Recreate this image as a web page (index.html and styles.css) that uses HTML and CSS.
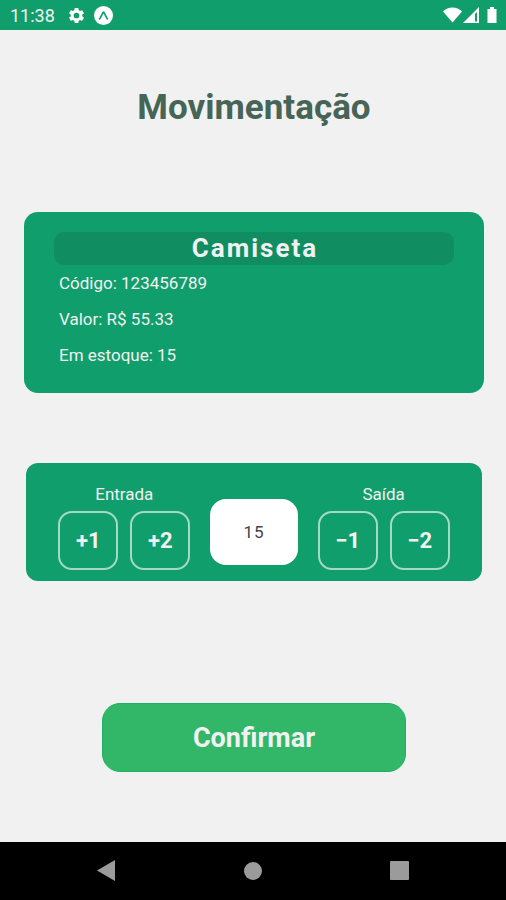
FILE: index.html
```html
<!DOCTYPE html>
<html lang="pt-BR">
<head>
    <meta charset="UTF-8">
    <meta name="viewport" content="width=device-width, initial-scale=1.0">
    <title>Movimentação</title>
    <link rel="stylesheet" href="styles.css">
</head>
<body>
    <header class="status-bar">
        <span class="clock">11:38</span>
        <svg class="status-icon" viewBox="0 0 24 24" width="19" height="19" fill="#fff">
            <path d="M19.14 12.94c.04-.3.06-.61.06-.94s-.02-.64-.07-.94l2.03-1.58a.49.49 0 0 0 .12-.61l-1.92-3.32a.49.49 0 0 0-.59-.22l-2.39.96a7 7 0 0 0-1.62-.94l-.36-2.54a.48.48 0 0 0-.48-.41h-3.84a.47.47 0 0 0-.47.41l-.36 2.54c-.59.24-1.13.57-1.62.94l-2.39-.96a.48.48 0 0 0-.59.22L2.74 8.87a.47.47 0 0 0 .12.61l2.03 1.58c-.05.3-.09.63-.09.94s.02.64.07.94l-2.03 1.58a.49.49 0 0 0-.12.61l1.92 3.32c.12.22.37.29.59.22l2.39-.96c.5.38 1.03.7 1.62.94l.36 2.54c.05.24.24.41.48.41h3.84c.24 0 .44-.17.47-.41l.36-2.54a7 7 0 0 0 1.62-.94l2.39.96c.22.08.47 0 .59-.22l1.92-3.32a.47.47 0 0 0-.12-.61zM12 15.6a3.6 3.6 0 1 1 0-7.2 3.6 3.6 0 0 1 0 7.2z"/>
        </svg>
        <svg class="status-icon" viewBox="0 0 20 20" width="19" height="19">
            <circle cx="10" cy="10" r="10" fill="#fff"/>
            <path d="M5.8 13.6C7.6 11.6 8.4 8.6 9.5 6.8c.3-.4.7-.4 1 0 1.1 1.8 1.9 4.8 3.7 6.8" fill="none" stroke="#109e6c" stroke-width="1.7" stroke-linecap="round"/>
        </svg>
        <svg class="signals" viewBox="0 0 56 20" width="56" height="20" fill="#fff">
            <path d="M1 6.500C6 1 15 1 20 6.500L10.500 17.500z"/>
            <path fill-rule="evenodd" d="M37 2v16H21zM33 9v7.500h2V7z"/>
            <path d="M48 2h4v2h2.500v14h-9V4H48z"/>
        </svg>
    </header>

    <main class="container">
        <h1>Movimentação</h1>

        <section class="product">
            <h2>Camiseta</h2>
            <p>Código: 123456789</p>
            <p>Valor: R$ 55.33</p>
            <p>Em estoque: 15</p>
        </section>

        <section class="movement">
            <div class="group">
                <span class="group-label" id="entrada">Entrada</span>
                <div class="buttons" role="group" aria-labelledby="entrada">
                    <button class="step" type="button" onclick="changeAmount(1)">+1</button>
                    <button class="step" type="button" onclick="changeAmount(2)">+2</button>
                </div>
            </div>
            <input class="amount" id="amount" type="text" inputmode="numeric" value="15" aria-label="Quantidade">
            <div class="group">
                <span class="group-label" id="saida">Saída</span>
                <div class="buttons" role="group" aria-labelledby="saida">
                    <button class="step" type="button" onclick="changeAmount(-1)">−1</button>
                    <button class="step" type="button" onclick="changeAmount(-2)">−2</button>
                </div>
            </div>
        </section>

        <button class="confirm" type="button">Confirmar</button>
    </main>

    <nav class="nav-bar">
        <button class="nav-button" type="button" aria-label="Voltar">
            <svg viewBox="0 0 20 22" width="20" height="22" fill="#9b9b9b"><path d="M19 0v21L1 10.500z"/></svg>
        </button>
        <button class="nav-button" type="button" aria-label="Início">
            <svg viewBox="0 0 20 20" width="20" height="20" fill="#9b9b9b"><circle cx="10" cy="10" r="9"/></svg>
        </button>
        <button class="nav-button" type="button" aria-label="Recentes">
            <svg viewBox="0 0 20 20" width="20" height="20" fill="#9b9b9b"><rect width="19" height="19" rx="1"/></svg>
        </button>
    </nav>

    <script>
        // Add or remove items, never going below zero
        function changeAmount(step) {
            const amount = document.getElementById('amount');
            amount.value = Math.max(0, (parseInt(amount.value, 10) || 0) + step);
        }
    </script>
</body>
</html>
```
FILE: styles.css
```css
* {
    box-sizing: border-box;
}

body {
    font-family: Roboto, sans-serif;
    margin: 0;
    background-color: #f1f1f1;
    color: #f1f1f1;
    display: flex;
    flex-direction: column;
    min-height: 100vh;
}

button,
input {
    font-family: inherit;
}

button {
    cursor: pointer;
}

.status-bar {
    display: flex;
    align-items: center;
    height: 30px;
    padding: 0 8px 0 10px;
    background-color: #109e6c;
}

.clock {
    font-size: 18px;
    margin-right: 4px;
}

.status-icon {
    margin-left: 8px;
}

.signals {
    margin-left: auto;
}

.container {
    flex: 1;
    display: flex;
    flex-direction: column;
    align-items: center;
    padding: 58px 22px 20px 24px;
}

h1 {
    margin: 0 0 84px;
    font-size: 35px;
    line-height: 40px;
    color: #466556;
}

.product {
    width: 100%;
    padding: 20px 30px;
    background-color: #109e6c;
    border-radius: 14px;
}

.product h2 {
    margin: 0;
    padding-left: 2px;
    font-size: 26px;
    line-height: 33px;
    letter-spacing: 2px;
    text-align: center;
    background-color: #108e61;
    border-radius: 10px;
}

.product p {
    margin: 0;
    padding-left: 5px;
    font-size: 17px;
    line-height: 36px;
}

.movement {
    display: flex;
    justify-content: space-between;
    align-items: flex-end;
    width: 99%;
    margin: 70px 0 122px;
    padding: 20px 32px 11px;
    background-color: #109e6c;
    border-radius: 12px;
}

.group {
    display: flex;
    flex-direction: column;
    align-items: center;
    gap: 6px;
}

.group-label {
    font-size: 17px;
    line-height: 22px;
}

.buttons {
    display: flex;
    gap: 12px;
}

.step {
    width: 60px;
    height: 59px;
    padding: 0;
    background: none;
    border: 2px solid #a5d9c7;
    border-radius: 14px;
    color: #f1f1f1;
    font-size: 22px;
    font-weight: bold;
}

.amount {
    width: 88px;
    height: 66px;
    margin-bottom: 5px;
    padding: 0;
    background-color: #fff;
    border: none;
    border-radius: 16px;
    color: #444;
    font-size: 17px;
    letter-spacing: 1px;
    text-align: center;
}

.confirm {
    width: 66%;
    height: 69px;
    background-color: #32b768;
    border: 1px solid #1fb063;
    border-radius: 18px;
    color: #f1f1f1;
    font-size: 27px;
    font-weight: bold;
}

.nav-bar {
    display: flex;
    justify-content: space-around;
    align-items: center;
    height: 58px;
    padding: 0 33px;
    background-color: #000;
}

.nav-button {
    display: flex;
    padding: 8px;
    background: none;
    border: none;
}
```
